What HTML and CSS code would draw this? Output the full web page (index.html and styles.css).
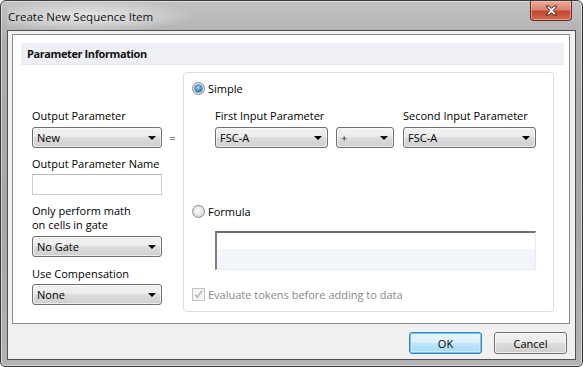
FILE: index.html
```html
<!DOCTYPE html>
<html lang="en">
<head>
    <meta charset="UTF-8">
    <meta name="viewport" content="width=device-width, initial-scale=1.0">
    <title>Create New Sequence Item</title>
    <link rel="stylesheet" href="styles.css">
</head>
<body>
    <div class="window">
        <div class="titlebar">
            <span class="title">Create New Sequence Item</span>
            <div class="close-btn">
                <svg width="13" height="11" viewBox="0 0 13 11">
                    <path d="M1 1 L4.2 1 L6.5 3.4 L8.8 1 L12 1 L8.3 5.5 L12 10 L8.8 10 L6.5 7.6 L4.2 10 L1 10 L4.7 5.5 Z" fill="#ffffff" stroke="#4e2219" stroke-width="1" stroke-linejoin="round"/>
                </svg>
            </div>
        </div>
        <div class="client">
            <div class="panel">
                <div class="section-head">Parameter Information</div>
                <div class="section-body">
                    <!-- left column -->
                    <div class="left-col">
                        <div class="lbl lbl-out">Output Parameter</div>
                        <div class="combo combo-left"><span>New</span><i class="arrow"></i></div>
                        <div class="lbl lbl-name">Output Parameter Name</div>
                        <div class="textbox"></div>
                        <div class="lbl lbl-two">Only perform math<br>on cells in gate</div>
                        <div class="combo combo-left"><span>No Gate</span><i class="arrow"></i></div>
                        <div class="lbl lbl-comp">Use Compensation</div>
                        <div class="combo combo-left"><span>None</span><i class="arrow"></i></div>
                    </div>
                    <div class="eq">=</div>
                    <!-- right group -->
                    <div class="group">
                        <div class="option opt-simple">
                            <span class="radio checked"><i></i></span>
                            <span>Simple</span>
                        </div>
                        <div class="params">
                            <div class="param param-first">
                                <div class="lbl">First Input Parameter</div>
                                <div class="combo"><span>FSC-A</span><i class="arrow"></i></div>
                            </div>
                            <div class="param param-op">
                                <div class="lbl">&nbsp;</div>
                                <div class="combo"><span class="plus">+</span><i class="arrow"></i></div>
                            </div>
                            <div class="param param-second">
                                <div class="lbl">Second Input Parameter</div>
                                <div class="combo"><span>FSC-A</span><i class="arrow"></i></div>
                            </div>
                        </div>
                        <div class="option opt-formula">
                            <span class="radio"></span>
                            <span>Formula</span>
                        </div>
                        <div class="formula-box"></div>
                        <div class="option opt-check disabled">
                            <span class="checkbox">
                                <svg width="11" height="11" viewBox="0 0 11 11">
                                    <path d="M2 5.5 L4.3 8.3 L9 1.8" fill="none" stroke="#b9b9b9" stroke-width="1.6"/>
                                </svg>
                            </span>
                            <span>Evaluate tokens before adding to data</span>
                        </div>
                    </div>
                </div>
            </div>
            <div class="footer">
                <button class="btn btn-default">OK</button>
                <button class="btn">Cancel</button>
            </div>
        </div>
    </div>
</body>
</html>
```

FILE: styles.css
```css
* {
    margin: 0;
    padding: 0;
    box-sizing: border-box;
}
body {
    width: 583px;
    height: 367px;
    background: #ffffff;
    font-family: "Open Sans", "Noto Sans", sans-serif;
    font-size: 11px;
    color: #000000;
    overflow: hidden;
}
.window {
    width: 583px;
    height: 367px;
    border: 1px solid #3c3c3c;
    border-radius: 6px 6px 5px 5px;
    background: linear-gradient(180deg, #c2c2c2 0%, #adadad 12%, #a6a6a6 60%, #b3b3b3 100%);
    box-shadow: inset 0 0 0 1px rgba(255, 255, 255, 0.45);
    padding: 0 6px 6px;
    display: flex;
    flex-direction: column;
}
.titlebar {
    height: 29px;
    display: flex;
    align-items: flex-start;
    background: radial-gradient(ellipse 110px 16px at 80px 15px, rgba(232, 232, 232, 0.95) 0%, rgba(220, 220, 220, 0.6) 60%, rgba(200, 200, 200, 0) 100%);
}
.title {
    font-size: 11.5px;
    line-height: 16px;
    padding: 8px 0 0 1px;
    color: #111111;
}
.close-btn {
    margin-left: auto;
    margin-right: 4px;
    width: 42px;
    height: 20px;
    border: 1px solid #6b2d22;
    border-top: 0;
    border-radius: 0 0 4px 4px;
    background: linear-gradient(180deg, #eaaa9b 0%, #da8572 45%, #c4472f 55%, #d06d52 100%);
    box-shadow: inset 0 0 0 1px rgba(255, 200, 185, 0.5);
    display: flex;
    align-items: center;
    justify-content: center;
}
.client {
    flex: 1;
    border: 1px solid #4f4f4f;
    background: #f0f0f0;
    display: flex;
    flex-direction: column;
}
.panel {
    margin: 3px 5px 0 4px;
    height: 290px;
    border: 1px solid #8a8c8e;
    background: #ffffff;
}
.section-head {
    margin: 8px 5px 0 8px;
    height: 22px;
    line-height: 22px;
    padding-left: 6px;
    background: #eef0f5;
    border-bottom: 1px solid #e4e7ed;
    font-weight: bold;
    letter-spacing: -0.4px;
    color: #111111;
}
.section-body {
    display: flex;
    margin-top: 7px;
    padding-left: 19px;
}
.left-col {
    width: 130px;
    display: flex;
    flex-direction: column;
}
.lbl {
    line-height: 15px;
    white-space: nowrap;
}
.lbl-out {
    margin-top: 36px;
    margin-bottom: 4px;
}
.lbl-name {
    margin-top: 8px;
    margin-bottom: 3px;
}
.lbl-two {
    line-height: 14px;
    margin-top: 9px;
    margin-bottom: 4px;
}
.lbl-comp {
    margin-top: 9px;
    margin-bottom: 3px;
}
.eq {
    width: 21px;
    text-align: center;
    margin-top: 58px;
    line-height: 15px;
    height: 15px;
}
.combo {
    height: 21px;
    border: 1px solid #707070;
    border-radius: 3px;
    background: linear-gradient(180deg, #f2f2f2 0%, #ebebeb 50%, #dddddd 50%, #cfcfcf 100%);
    box-shadow: inset 0 0 0 1px rgba(255, 255, 255, 0.6);
    display: flex;
    align-items: center;
    justify-content: space-between;
    padding: 0 5px 0 4px;
}
.combo .arrow {
    width: 0;
    height: 0;
    border-left: 4px solid transparent;
    border-right: 4px solid transparent;
    border-top: 4px solid #000000;
}
.combo-left {
    width: 130px;
}
.textbox {
    width: 130px;
    height: 21px;
    border: 1px solid #cdcdcd;
    border-top-color: #b9b9b9;
    background: #ffffff;
}
.group {
    width: 371px;
    height: 240px;
    border: 1px solid #d6dde3;
    border-radius: 4px;
    padding: 0 0 0 8px;
}
.option {
    display: flex;
    align-items: center;
    height: 15px;
}
.opt-simple {
    margin-top: 8px;
}
.opt-formula {
    margin-top: 56px;
}
.opt-check {
    margin-top: 17px;
}
.disabled {
    color: #8a8a8a;
}
.radio {
    width: 13px;
    height: 13px;
    border-radius: 50%;
    border: 1px solid #8b8b8b;
    background: radial-gradient(circle at 50% 40%, #fbfbfb 0%, #e4e4e4 55%, #cfcfcf 100%);
    margin-right: 3px;
    display: flex;
    align-items: center;
    justify-content: center;
}
.radio.checked i {
    width: 7px;
    height: 7px;
    border-radius: 50%;
    background: radial-gradient(circle at 45% 35%, #a6dcff 0%, #3f9ad6 45%, #175c92 100%);
    box-shadow: 0 0 0 0.5px #123f66;
}
.checkbox {
    width: 13px;
    height: 13px;
    border: 1px solid #c2c2c2;
    background: #f5f5f5;
    margin-right: 3px;
    display: flex;
    align-items: center;
    justify-content: center;
}
.params {
    display: flex;
    margin: 12px 0 0 23px;
}
.param {
    flex: none;
}
.params .lbl {
    margin-bottom: 4px;
}
.param-first {
    width: 113px;
}
.param-op {
    width: 58px;
    margin-left: 8px;
}
.param-second {
    width: 133px;
    margin-left: 9px;
}
.plus {
    color: #1e2a3a;
}
.formula-box {
    margin: 12px 0 0 23px;
    width: 321px;
    height: 39px;
    border-top: 2px solid #6f6f6f;
    border-left: 2px solid #7f7f7f;
    border-right: 1px solid #e6ebf1;
    border-bottom: 1px solid #e6ebf1;
    background: linear-gradient(180deg, #ffffff 0%, #ffffff 45%, #f2f5fa 45%, #f2f5fa 100%);
}
.footer {
    flex: 1;
    display: flex;
    justify-content: flex-end;
    align-items: flex-start;
    gap: 12px;
    padding: 8px 8px 0 0;
}
.btn {
    width: 73px;
    height: 22px;
    border: 1px solid #707070;
    border-radius: 3px;
    background: linear-gradient(180deg, #f2f2f2 0%, #ebebeb 50%, #dddddd 50%, #cfcfcf 100%);
    box-shadow: inset 0 0 0 1px rgba(255, 255, 255, 0.7);
    font-family: "Open Sans", "Noto Sans", sans-serif;
    font-size: 11px;
    color: #000000;
    outline: 0;
}
.btn-default {
    border-color: #3c7fb1;
    background: linear-gradient(180deg, #eaf6fd 0%, #d9f0fc 50%, #bee6fd 50%, #a7d9f5 100%);
    box-shadow: inset 0 0 0 1px #6cc9f7, inset 0 0 0 2px rgba(220, 245, 255, 0.6);
}
```
